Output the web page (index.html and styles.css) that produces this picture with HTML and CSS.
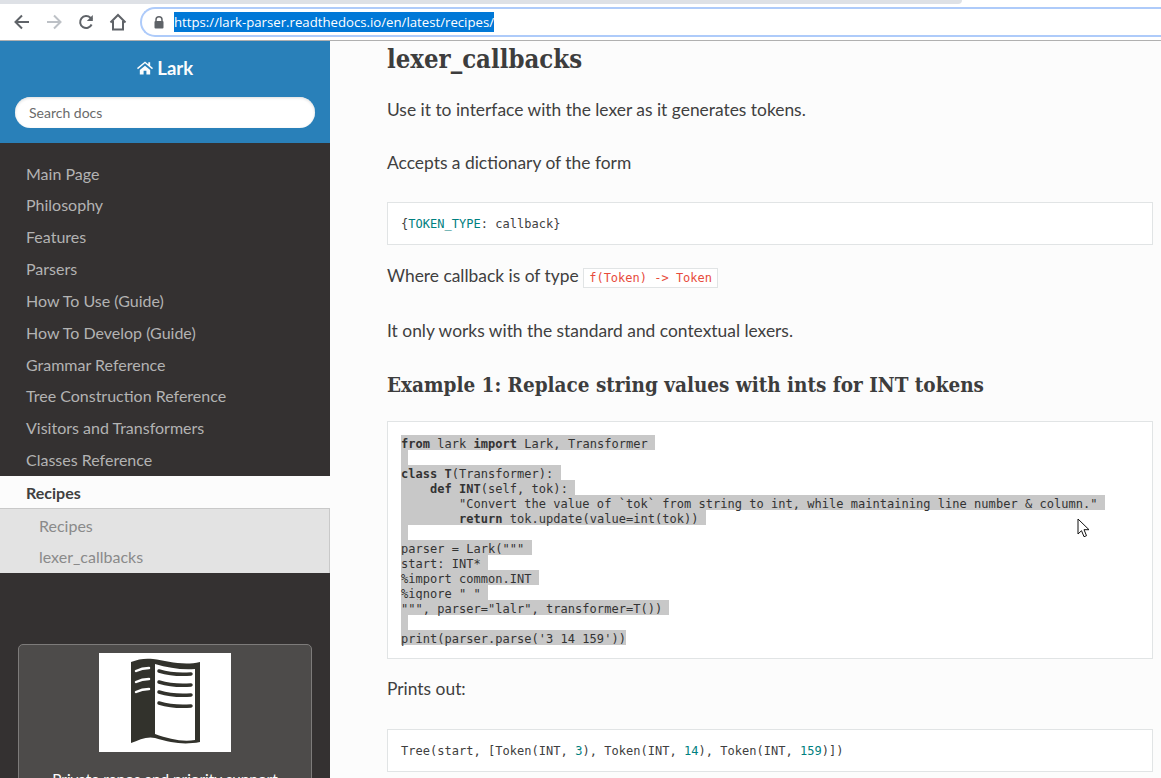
FILE: index.html
```html
<!DOCTYPE html>
<html lang="en">
<head>
    <meta charset="UTF-8">
    <title>Recipes - Lark</title>
    <link rel="stylesheet" href="styles.css">
</head>
<body>
    <!-- Browser toolbar -->
    <div class="tab-strip"><div class="tab-edge"></div></div>
    <div class="toolbar">
        <svg class="tool" width="20" height="20" viewBox="0 0 20 20"><path d="M17 10H4M10 3.500 3.500 10l6.500 6.500" fill="none" stroke="#5f6368" stroke-width="2"/></svg>
        <svg class="tool" width="20" height="20" viewBox="0 0 20 20"><path d="M3 10h13M10 3.500l6.500 6.500-6.500 6.500" fill="none" stroke="#bdc1c6" stroke-width="2"/></svg>
        <svg class="tool" width="20" height="20" viewBox="0 0 20 20"><path d="M15.600 12.500A6 6 0 1 1 14.400 5.800L16 7.500" fill="none" stroke="#5f6368" stroke-width="2"/><path d="M16.800 3v6h-6z" fill="#5f6368"/></svg>
        <svg class="tool" width="20" height="20" viewBox="0 0 20 20"><path d="M2.500 10.500 10 3l7.500 7.500M5 9v8.500h10V9" fill="none" stroke="#5f6368" stroke-width="2"/></svg>
        <div class="omnibox">
            <svg width="10" height="13" viewBox="0 0 10 13"><path d="M2 5.500V3.800a3 3 0 0 1 6 0v1.700" fill="none" stroke="#5f6368" stroke-width="1.500"/><rect x="0.500" y="5" width="9" height="7.500" rx="1" fill="#5f6368"/></svg>
            <span class="url">https://lark-parser.readthedocs.io/en/latest/recipes/</span>
        </div>
    </div>

    <div class="page">
        <!-- Sidebar -->
        <div class="sidebar">
            <div class="side-top">
                <div class="project">
                    <svg width="16" height="14" viewBox="0 0 17 14"><path d="M8.500 0 0 7l1 1.200L8.500 2 16 8.200 17 7l-3-2.500V1h-2v1.900zM3 9v5h4v-4h3v4h4V9L8.500 4.500z" fill="#fcfcfc"/></svg>
                    Lark
                </div>
                <div class="search">Search docs</div>
            </div>
            <ul class="menu">
                <li>Main Page</li>
                <li>Philosophy</li>
                <li>Features</li>
                <li>Parsers</li>
                <li>How To Use (Guide)</li>
                <li>How To Develop (Guide)</li>
                <li>Grammar Reference</li>
                <li>Tree Construction Reference</li>
                <li>Visitors and Transformers</li>
                <li>Classes Reference</li>
                <li class="current">Recipes</li>
                <li class="sub">Recipes</li>
                <li class="sub">lexer_callbacks</li>
            </ul>
            <div class="sponsor">
                <div class="sponsor-img">
                    <svg width="69" height="89" viewBox="0 0 69 89">
                        <path d="M0 4C7 1 15 0 22 1c14 2 30 7 47 3v80c-16 3-28 1-45-4-8-2-16 2-24 5z" fill="#32322c"/>
                        <path d="M24 6c13 4 27 6 40 5v71c-13 2-26-1-40-6z" fill="#fff"/>
                        <path d="M28 13c10 3 20 4 32 3M28 24c10 3 20 4 32 3M28 34c10 3 20 4 32 3M28 45c10 3 20 4 32 3" fill="none" stroke="#32322c" stroke-width="3.500" stroke-linecap="round"/>
                        <path d="M5 13c4-2 9-3 13-3M5 24c4-2 9-3 13-3M5 34c4-2 9-3 13-3" fill="none" stroke="#fff" stroke-width="2.500" stroke-linecap="round"/>
                    </svg>
                </div>
                <p class="sponsor-text">Private repos and priority support</p>
            </div>
        </div>

        <!-- Document -->
        <div class="content">
            <h2>lexer_callbacks</h2>
            <p>Use it to interface with the lexer as it generates tokens.</p>
            <p class="before-code">Accepts a dictionary of the form</p>
            <pre class="code">{<span class="teal">TOKEN_TYPE</span>: callback}</pre>
            <p class="where">Where callback is of type <code>f(Token) -&gt; Token</code></p>
            <p>It only works with the standard and contextual lexers.</p>
            <h3>Example 1: Replace string values with ints for INT tokens</h3>
            <div class="code selected">
                <div><span><b>from</b> lark <b>import</b> Lark, Transformer </span></div>
                <div><span> </span></div>
                <div><span><b>class</b> <b>T</b>(Transformer): </span></div>
                <div><span>    <b>def</b> <b>INT</b>(self, tok): </span></div>
                <div><span>        "Convert the value of `tok` from string to int, while maintaining line number &amp; column." </span></div>
                <div><span>        <b>return</b> tok.update(value=int(tok)) </span></div>
                <div><span> </span></div>
                <div><span>parser = Lark(""" </span></div>
                <div><span>start: INT* </span></div>
                <div><span>%import common.INT </span></div>
                <div><span>%ignore " " </span></div>
                <div><span>""", parser="lalr", transformer=T()) </span></div>
                <div><span> </span></div>
                <div><span>print(parser.parse('3 14 159'))</span></div>
            </div>
            <p class="prints">Prints out:</p>
            <pre class="code">Tree(start, [Token(INT, <span class="teal">3</span>), Token(INT, <span class="teal">14</span>), Token(INT, <span class="teal">159</span>)])</pre>
        </div>
    </div>

    <svg class="cursor" width="13" height="20" viewBox="0 0 13 20"><path d="M1 1v15l3.500-3.300 2.500 6 2.500-1-2.500-6H12z" fill="#fff" stroke="#111" stroke-width="1"/></svg>
</body>
</html>
```

FILE: styles.css
```css
html, body {
    margin: 0;
    padding: 0;
    height: 778px;
    overflow: hidden;
}

body {
    position: relative;
    font-family: Lato, "Liberation Sans", sans-serif;
    background: #fcfcfc;
    color: #404040;
}

/* Browser toolbar */
.tab-strip {
    height: 4px;
    background: #fff;
}

.tab-edge {
    width: 962px;
    height: 4px;
    background: #dee1e6;
    border-bottom-right-radius: 4px;
}

.toolbar {
    display: flex;
    align-items: center;
    height: 36px;
    padding-left: 12px;
    gap: 12px;
    background: #fff;
    border-bottom: 1px solid #b0b0b0;
}

.omnibox {
    flex: 1;
    display: flex;
    align-items: center;
    gap: 10px;
    height: 26px;
    padding-left: 12px;
    background: #fff;
    border: 2px solid #aecbfa;
    border-right: none;
    border-radius: 15px 0 0 15px;
}

.url {
    background: #0078d7;
    color: #fff;
    font-family: "Open Sans", "Liberation Sans", sans-serif;
    font-size: 13.200px;
    line-height: 20px;
}

/* Sidebar */
.page {
    display: flex;
}

.sidebar {
    flex: none;
    width: 330px;
    height: 737px;
    background: #343131;
    overflow: hidden;
}

.side-top {
    height: 102px;
    background: #2980b9;
    text-align: center;
}

.project {
    padding-top: 15px;
    font-size: 18.500px;
    font-weight: 700;
    line-height: 24px;
    color: #fcfcfc;
}

.search {
    margin: 17px 15px 0;
    height: 31px;
    padding-left: 14px;
    background: #fff;
    border-radius: 16px;
    box-shadow: inset 0 1px 3px #ddd;
    font-size: 14px;
    line-height: 32px;
    color: #6a6a6a;
    text-align: left;
}

.menu {
    list-style: none;
    margin: 14.500px 0 0;
    padding: 0;
}

.menu li {
    height: 31.850px;
    padding-left: 26px;
    font-size: 16px;
    line-height: 32px;
    color: #b3b3b3;
}

.menu .current {
    height: 32px;
    background: #fcfcfc;
    font-weight: 700;
    line-height: 34px;
    color: #404040;
}

.menu .sub {
    height: 32px;
    padding-left: 39px;
    background: #e3e3e3;
    color: #8a8a8a;
    border-right: 1px solid #c9c9c9;
}

.menu .current + .sub {
    border-top: 1px solid #c9c9c9;
    line-height: 34px;
}

.sponsor {
    margin: 71.500px 18px 0;
    padding-top: 8px;
    height: 300px;
    background: #4d4b4a;
    border: 1px solid #7d7b7a;
    border-radius: 5px;
    text-align: center;
}

.sponsor-img {
    display: flex;
    justify-content: center;
    align-items: center;
    width: 132px;
    height: 99px;
    margin: 0 auto;
    background: #fff;
}

.sponsor-text {
    margin: 15px 0 0;
    font-size: 15.300px;
    color: #fcfcfc;
}

/* Document */
.content {
    flex: 1;
    min-width: 0;
    padding: 0 8px 0 57px;
}

h2 {
    margin: 2px 0 23px;
    font-family: "DejaVu Serif Condensed", "DejaVu Serif", serif;
    font-stretch: condensed;
    font-size: 25.500px;
    line-height: 32px;
    color: #3d3d3d;
}

h3 {
    margin: 30px 0 24px;
    font-family: "DejaVu Serif Condensed", "DejaVu Serif", serif;
    font-stretch: condensed;
    font-size: 20.500px;
    line-height: 24px;
    color: #3d3d3d;
}

p {
    margin: 0 0 29px;
    font-size: 17.400px;
    line-height: 24px;
}

.before-code {
    margin-bottom: 27px;
}

.where {
    margin-bottom: 29px;
}

.prints {
    margin-bottom: 28px;
}

.code {
    margin: 0 0 19px;
    padding: 14px 13px 12px;
    background: #fff;
    border: 1px solid #e1e4e5;
    font-family: "DejaVu Sans Mono", "Liberation Mono", monospace;
    font-size: 12px;
    letter-spacing: 0.030px;
    line-height: 15px;
    color: #404040;
    white-space: pre;
}

.code .teal {
    color: #008080;
}

.selected {
    padding: 13px;
    margin-bottom: 18px;
    height: 210px;
    white-space: normal;
}

.selected div {
    height: 15px;
    white-space: pre;
}

.selected span {
    display: inline-block;
    height: 15px;
    line-height: 19px;
    background: #c8c8c8;
    color: #333;
}

code {
    padding: 2px 5px;
    background: #fff;
    border: 1px solid #e1e4e5;
    font-family: "DejaVu Sans Mono", "Liberation Mono", monospace;
    font-size: 12px;
    color: #e74c3c;
}

/* Mouse pointer, part of the capture */
.cursor {
    position: absolute;
    left: 1077px;
    top: 518px;
}
```
